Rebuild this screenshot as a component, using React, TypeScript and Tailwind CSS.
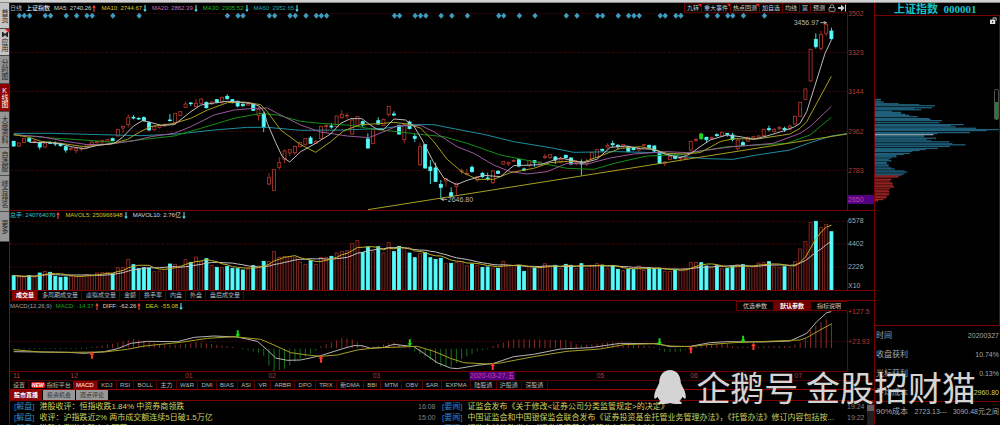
import { Lock } from 'lucide-react'

// [rising, body top, body bottom, high, low, volume top]
// Vertical values are chart units, three to a pixel, growing downwards.
type Candle = [number, number, number, number, number, number]
type Point = [number, number]

const CANDLES: Candle[] = [
  [0, 424, 438, 422, 440, 226], [1, 429, 438, 427, 441, 230], [1, 416, 427, 414, 429, 231], [0, 416, 424, 410, 426, 226],
  [1, 424, 427, 418, 430, 230], [0, 428, 441, 425, 449, 218], [1, 429, 441, 427, 443, 213], [0, 428, 430, 423, 432, 216],
  [0, 430, 432, 424, 438, 228], [0, 431, 437, 429, 440, 231], [0, 440, 450, 437, 458, 230], [1, 446, 448, 442, 452, 228],
  [1, 446, 452, 442, 460, 228], [1, 446, 448, 440, 454, 228], [1, 434, 444, 432, 446, 224], [1, 426, 437, 424, 439, 226],
  [1, 424, 428, 422, 430, 218], [1, 421, 426, 420, 430, 217], [1, 418, 424, 418, 426, 216], [0, 416, 422, 413, 424, 220],
  [1, 388, 408, 388, 408, 202], [1, 379, 384, 377, 398, 202], [1, 353, 374, 343, 382, 177], [0, 352, 354, 345, 358, 193],
  [0, 355, 357, 352, 360, 205], [0, 353, 362, 349, 364, 202], [0, 368, 390, 364, 392, 203], [1, 378, 389, 376, 392, 214],
  [1, 376, 382, 372, 386, 212], [1, 374, 378, 370, 380, 208], [0, 360, 362, 342, 364, 191], [1, 340, 368, 340, 375, 192],
  [1, 335, 346, 333, 348, 197], [1, 312, 322, 304, 324, 178], [0, 309, 311, 306, 318, 186], [1, 310, 320, 296, 322, 170],
  [1, 297, 310, 296, 312, 184], [0, 307, 323, 305, 326, 175], [1, 306, 312, 304, 314, 195], [0, 299, 306, 297, 310, 201],
  [1, 292, 305, 290, 312, 202], [0, 289, 296, 283, 299, 198], [0, 299, 308, 297, 310, 204], [0, 304, 318, 302, 322, 205],
  [0, 313, 317, 306, 320, 209], [1, 310, 315, 305, 318, 206], [0, 313, 331, 311, 333, 196], [1, 328, 346, 322, 362, 197],
  [0, 341, 381, 335, 396, 183], [1, 533, 552, 519, 556, 184], [1, 509, 571, 509, 571, 154], [1, 487, 502, 471, 508, 171],
  [1, 453, 478, 448, 490, 168], [1, 449, 459, 447, 468, 170], [1, 439, 458, 437, 465, 172], [1, 428, 440, 425, 442, 185],
  [1, 416, 434, 414, 436, 192], [0, 414, 430, 408, 432, 181], [1, 425, 430, 420, 432, 192], [1, 379, 416, 377, 418, 171],
  [1, 376, 380, 373, 396, 171], [0, 378, 381, 370, 386, 168], [1, 348, 380, 348, 382, 158], [1, 343, 353, 330, 356, 153],
  [1, 346, 348, 339, 356, 151], [1, 360, 402, 358, 404, 129], [1, 350, 378, 348, 380, 121], [0, 365, 375, 362, 380, 156],
  [0, 417, 444, 400, 446, 141], [1, 387, 430, 387, 430, 155], [0, 362, 372, 352, 374, 139], [1, 358, 376, 356, 378, 158],
  [1, 319, 344, 319, 350, 127], [0, 342, 345, 334, 348, 154], [0, 376, 402, 374, 404, 138], [1, 374, 419, 372, 430, 143],
  [0, 366, 386, 362, 388, 158], [0, 409, 415, 402, 426, 172], [1, 440, 494, 430, 498, 160], [0, 434, 504, 434, 506, 156],
  [0, 501, 512, 480, 552, 172], [0, 504, 544, 488, 546, 177], [0, 553, 562, 540, 598, 174], [1, 536, 543, 534, 560, 190],
  [0, 578, 590, 562, 592, 189], [1, 550, 560, 548, 586, 186], [1, 511, 514, 506, 522, 184], [1, 520, 523, 508, 526, 196],
  [0, 502, 515, 496, 518, 191], [1, 530, 540, 528, 546, 195], [0, 520, 530, 516, 534, 201], [0, 534, 537, 518, 542, 200],
  [1, 513, 548, 510, 552, 203], [0, 514, 520, 510, 522, 204], [1, 484, 492, 484, 494, 183], [1, 488, 492, 484, 498, 196],
  [1, 481, 484, 478, 486, 196], [0, 479, 498, 476, 502, 195], [0, 507, 510, 503, 514, 213], [1, 482, 497, 480, 500, 199],
  [0, 482, 488, 480, 500, 203], [1, 486, 492, 484, 494, 203], [1, 469, 472, 462, 478, 190], [1, 464, 472, 462, 476, 200],
  [0, 471, 480, 468, 492, 195], [1, 478, 486, 470, 490, 205], [0, 466, 473, 464, 475, 192], [0, 474, 492, 472, 494, 195],
  [1, 487, 491, 480, 496, 205], [0, 486, 492, 478, 526, 190], [1, 484, 492, 476, 498, 205], [1, 458, 476, 456, 478, 195],
  [1, 449, 472, 447, 474, 190], [0, 448, 451, 446, 456, 195], [1, 436, 441, 430, 446, 205], [0, 431, 434, 422, 442, 197],
  [0, 436, 440, 432, 448, 207], [1, 434, 438, 432, 446, 211], [0, 440, 455, 438, 457, 207], [0, 444, 449, 442, 451, 208],
  [1, 446, 450, 442, 455, 197], [1, 434, 436, 432, 440, 210], [0, 436, 442, 434, 446, 202], [0, 438, 453, 436, 456, 204],
  [0, 458, 490, 456, 492, 206], [1, 486, 490, 484, 498, 213], [1, 470, 478, 468, 480, 213], [0, 468, 475, 464, 478, 209],
  [1, 472, 476, 468, 484, 211], [1, 472, 476, 470, 480, 205], [1, 424, 450, 422, 452, 186], [1, 418, 421, 415, 426, 186],
  [0, 402, 416, 398, 420, 187], [0, 412, 419, 410, 426, 197], [1, 412, 416, 410, 420, 203], [0, 404, 407, 400, 410, 196],
  [1, 397, 408, 396, 410, 205], [0, 400, 403, 399, 410, 204], [0, 405, 418, 398, 424, 198], [1, 420, 446, 418, 452, 194],
  [0, 428, 437, 422, 438, 193], [1, 412, 423, 410, 426, 203], [1, 410, 414, 408, 420, 200], [1, 408, 416, 406, 418, 188],
  [1, 388, 406, 386, 408, 187], [0, 386, 389, 377, 394, 184], [1, 388, 394, 384, 398, 200], [1, 382, 386, 378, 390, 202],
  [0, 385, 389, 380, 396, 199], [1, 378, 388, 374, 390, 203], [1, 349, 372, 347, 374, 184], [1, 307, 349, 307, 351, 146],
  [1, 267, 298, 265, 300, 124], [1, 148, 243, 146, 245, 67], [0, 118, 140, 100, 146, 63], [1, 103, 145, 92, 152, 82],
  [1, 74, 100, 66, 108, 72], [0, 93, 116, 83, 120, 94],
]

const STEP = 15.645
const xAt = (i: number) => 38 + i * STEP
// left edge of a label as a share of the chart width
const leftAt = (i: number) => `${((xAt(i) - 29) / 2514) * 100}%`

const MA_LINES = [
  { color: '#1f8ea0', d: '38,400 150,400 300,404 420,407 530,402 640,390 740,382 800,382 900,391 1030,390 1150,385 1230,374 1300,374 1370,388 1450,403 1540,425 1650,443 1720,457 1850,455 1970,458 2050,470 2120,476 2200,478 2270,465 2370,450 2430,428 2494,408 2541,401' },
  { color: '#149014', d: '38,404 150,414 250,420 350,428 430,418 520,408 600,385 700,355 780,340 830,345 900,364 960,370 1050,376 1120,388 1190,395 1260,403 1330,410 1400,430 1500,465 1600,485 1700,505 1780,508 1850,488 1940,468 2040,464 2180,440 2280,435 2360,430 2430,405 2494,352' },
  { color: '#9c589c', d: '38,404 120,410 200,425 260,434 330,432 400,422 450,410 520,400 570,380 640,345 700,330 760,325 800,324 830,340 900,375 960,396 1040,408 1105,413 1150,395 1190,378 1260,376 1300,395 1370,440 1420,460 1480,495 1530,515 1580,522 1640,515 1700,490 1760,492 1830,474 1900,462 2000,455 2060,458 2200,440 2320,430 2400,400 2430,380 2494,319' },
  { color: '#a8a020', d: '38,404 85,412 120,424 180,430 250,440 330,432 380,418 420,394 450,380 520,370 570,355 620,330 680,308 730,306 780,314 800,335 840,390 900,434 945,457 990,425 1030,392 1080,374 1150,370 1180,367 1220,372 1260,384 1300,425 1340,478 1385,516 1430,538 1480,538 1530,518 1600,505 1650,488 1700,484 1750,486 1800,468 1860,445 1920,440 1960,448 2000,460 2050,462 2100,458 2160,425 2200,416 2270,417 2370,402 2400,385 2420,365 2450,310 2494,229' },
  { color: '#bcbcbc', d: '85,427 148,428 180,431 210,440 250,446 290,436 340,430 365,412 398,378 425,362 445,366 480,376 520,374 545,355 570,335 600,315 640,309 680,304 710,306 750,310 775,318 790,335 800,370 825,428 845,470 867,486 900,455 940,433 990,402 1020,370 1050,356 1084,356 1105,372 1130,388 1150,388 1180,357 1215,360 1240,378 1265,420 1300,488 1330,534 1368,554 1400,541 1430,532 1450,526 1500,530 1540,497 1570,496 1620,494 1650,484 1680,474 1710,480 1750,488 1790,478 1830,442 1880,438 1920,446 1960,448 2000,464 2040,473 2070,462 2100,440 2130,420 2180,405 2220,410 2260,418 2300,408 2350,393 2384,380 2400,370 2420,335 2450,240 2475,160 2494,120' },
  { color: '#a8a020', d: '1102,629 2541,402' },
]

const DIAMONDS = [
  55, 70, 86, 133, 149, 196, 227, 258, 274, 336, 415, 680, 712, 727, 806, 822, 868, 884, 916, 947, 962, 978, 1182, 1197,
  1244, 1260, 1276, 1322, 1354, 1401, 1495, 1510, 1557, 1604, 1698, 1730, 1792, 1807, 1854, 1885, 1901, 1917, 1980, 1995,
  2027, 2042, 2121, 2152, 2183, 2198, 2230, 2293,
]

const HISTOGRAM: Point[] = [
  [38, 448], [260, 447], [268, 442], [320, 434], [398, 417], [440, 424], [480, 434], [540, 434], [585, 426], [630, 432], [695, 441],
  [726, 447], [773, 458], [790, 468], [805, 498], [820, 513], [850, 508], [883, 485], [930, 462], [950, 450], [961, 438],
  [992, 428], [1024, 414], [1055, 418], [1086, 436], [1110, 443], [1160, 430], [1180, 428], [1211, 440], [1230, 447],
  [1275, 470], [1321, 500], [1352, 500], [1385, 476], [1430, 454], [1462, 448], [1477, 438], [1508, 428], [1540, 418],
  [1600, 418], [1650, 420], [1700, 420], [1740, 436], [1830, 426], [1880, 432], [1960, 440], [1978, 450], [1995, 456],
  [2040, 455], [2060, 448], [2072, 438], [2180, 430], [2200, 440], [2370, 438], [2400, 428], [2420, 415], [2432, 390],
  [2455, 370], [2479, 358], [2494, 368],
]

const histogramAt = (x: number) => {
  const n = HISTOGRAM.findIndex((p) => p[0] >= x)
  if (n <= 0) return HISTOGRAM[n === 0 ? 0 : HISTOGRAM.length - 1][1]
  const [x0, y0] = HISTOGRAM[n - 1]
  const [x1, y1] = HISTOGRAM[n]
  return y0 + ((y1 - y0) * (x - x0)) / (x1 - x0)
}

const SIGNALS = [
  { x: 273, y: 465, up: true }, { x: 961, y: 477, up: true }, { x: 1477, y: 499, up: true },
  { x: 2072, y: 449, up: true }, { x: 2260, y: 439, up: true }, { x: 711, y: 402, up: false },
  { x: 1228, y: 429, up: false }, { x: 1978, y: 426, up: false }, { x: 2229, y: 418, up: false },
]

// chip distribution, [row, length]
const CHIPS: Point[] = [
  [297, 18], [302, 18], [305, 27], [310, 72], [313, 135], [316, 183], [322, 174], [325, 120], [328, 141], [333, 52], [336, 80],
  [339, 78], [342, 92], [345, 104], [349, 130], [355, 165], [358, 170], [361, 204], [367, 196], [373, 270], [376, 232],
  [380, 246], [384, 308], [388, 378], [391, 340], [397, 290], [400, 190], [407, 150], [410, 150], [414, 186],
  [417, 158], [422, 172], [425, 226], [431, 236], [434, 276], [439, 228], [445, 192], [448, 155], [451, 136], [454, 114],
  [460, 106], [463, 88], [467, 64], [470, 66], [474, 50], [479, 43], [482, 50], [487, 36], [491, 36], [495, 42],
  [498, 42], [504, 50], [507, 60], [513, 90], [516, 98], [522, 90], [525, 82],
]
const TRAPPED: Point[] = [
  [528, 74], [531, 70], [538, 50], [543, 46], [549, 52], [552, 54], [558, 55], [561, 58], [567, 46], [573, 42], [576, 44],
  [582, 44], [585, 42], [591, 36], [594, 34], [599, 26], [603, 10],
]

const VOLUME_TABS = ['成交量', '多周期成交量', '虚拟成交量', '金额', '换手率', '内盘', '外盘', '盘后成交量']
const INDICATORS = [
  'MACD', 'KDJ', 'RSI', 'BOLL', '主力', 'W&R', 'DMI', 'BIAS', 'ASI', 'VR', 'ARBR', 'DPO', 'TRIX', '新DMA', 'BBI', 'MTM', 'OBV',
  'SAR', 'EXPMA', '陆股通', '沪股通', '深股通',
]
const TOOLS = [
  { label: '九转', hot: true }, { label: '重大事件', hot: true }, { label: '热点回测', hot: true }, { label: '加自选' },
  { label: '均线' }, { label: '富' }, { label: '预测' },
]
const MONTHS = [
  { i: 0, label: '11' }, { i: 11, label: '12' }, { i: 33, label: '01' }, { i: 49, label: '02' }, { i: 69, label: '03' },
  { i: 112, label: '05' }, { i: 130, label: '06' }, { i: 150, label: '07' },
]
const NEWS_LEFT = [
  { tag: '[解盘]', title: '港股收评：恒指收跌1.84% 中资券商领跌', time: '16:08' },
  { tag: '[解盘]', title: '收评：沪指跌近2% 两市成交额连续5日破1.5万亿', time: '15:00' },
  { tag: '[解盘]', title: '港股上涨光大股上六国药', time: '' },
]
const NEWS_RIGHT = [
  { tag: '[要闻]', title: '证监会发布《关于修改<证券公司分类监管规定>的决定》', time: '19:24' },
  { tag: '[要闻]', title: '中国证监会和中国银保监会联合发布《证券投资基金托管业务管理办法》，《托管办法》修订内容包括按...', time: '19:22' },
  { tag: '[要闻]', title: '证监会就修改发布《证券投资基金托管业务管理办法》', time: '' },
]

const averageVolume = (n: number) =>
  CANDLES.map((_, i) => {
    const part = CANDLES.slice(Math.max(0, i - n + 1), i + 1)
    return `${xAt(i)},${part.reduce((sum, c) => sum + c[5], 0) / part.length}`
  }).join(' ')

function Line({ points, color }: { points: string; color: string }) {
  return <polyline points={points} fill="none" stroke={color} strokeWidth="3" strokeLinejoin="round" />
}

function Guides({ rows }: { rows: number[] }) {
  return (
    <g stroke="#420808" strokeWidth="2.5" strokeDasharray="9 4">
      {rows.map((y) => (
        <line key={y} x1="27" x2="2541" y1={y} y2={y} />
      ))}
    </g>
  )
}

function Trend({ up }: { up?: boolean }) {
  return (
    <svg viewBox="0 0 4 8" className={`h-[7px] w-1 shrink-0 ${up ? 'text-[#ff4a3c]' : 'text-[#54e8f8]'}`}>
      <path d={up ? 'M2 0L4 3H2.6V8H1.4V3H0Z' : 'M2 8L4 5H2.6V0H1.4V5H0Z'} fill="currentColor" />
    </svg>
  )
}

function Reading({ text, up, className }: { text: string; up?: boolean; className: string }) {
  return (
    <span className={`flex items-center gap-px whitespace-nowrap ${className}`}>
      {text}
      <Trend up={up} />
    </span>
  )
}

function SideNav() {
  const base = 'relative flex w-full items-center justify-center border-b border-[#4c4c4c] [writing-mode:vertical-rl] [text-orientation:upright]'
  return (
    <nav className="flex w-[9px] shrink-0 flex-col text-[7px] leading-[9px] text-[#222]">
      <button className={`${base} h-[26px] bg-[#c4c4c4]`}>首页</button>
      <button className={`${base} h-[27px] bg-[#c4c4c4]`}>
        <svg viewBox="0 0 6 5" className="mb-px h-[5px] w-[6px]">
          <path d="M0 0H1L3 2L5 0H6V5H5L3 3L1 5H0Z" fill="#222" />
        </svg>
        应用
        <svg viewBox="0 0 4 4" className="absolute top-0 right-0 size-1">
          <path d="M0 0H4V4Z" fill="#e01818" />
        </svg>
      </button>
      <button className={`${base} h-7 bg-[#969696]`}>分时图</button>
      <button className={`${base} h-7 bg-[#8c0000] text-white`}>K线图</button>
      <button className={`${base} h-9 bg-[#969696]`}>大盘资料</button>
      <button className={`${base} h-7 bg-[#969696]`}>自选股</button>
      <button className={`${base} h-9 bg-[#969696]`}>综合排名</button>
      <button className={`${base} h-[30px] bg-[#969696]`}>更多</button>
    </nav>
  )
}

function PriceHeader() {
  return (
    <header className="flex h-[10px] shrink-0 items-center pr-[27px]">
      <div className="flex flex-1 items-center gap-[5px]">
        <div className="flex gap-1">
          <span className="whitespace-nowrap text-[#b8b8b8]">日线</span>
          <h1 className="whitespace-nowrap text-white">上证指数</h1>
          <Reading text="MA5: 2740.26" up className="text-[#d8d8d8]" />
        </div>
        <Reading text="MA10: 2744.67" className="text-[#d0c820]" />
        <Reading text="MA20: 2862.39" className="text-[#c070c0]" />
        <Reading text="MA30: 2905.52" className="text-[#18b818]" />
        <Reading text="MA60: 2952.65" className="text-[#20a8b8]" />
      </div>
      <div className="flex h-full items-center border-y border-[#480000] text-[#d0d0d0]">
        {TOOLS.map((tool) => (
          <button key={tool.label} className="relative h-full border-l border-[#780000] px-[2px] leading-[9px] whitespace-nowrap">
            {tool.label}
            {tool.hot && (
              <svg viewBox="0 0 4 4" className="absolute top-0 right-0 size-[3px]">
                <path d="M0 0H4V4Z" fill="#ff2020" />
              </svg>
            )}
          </button>
        ))}
        <button aria-label="锁定" className="flex w-[10px] justify-center">
          <Lock className="size-2" />
        </button>
        <button aria-label="收起" className="flex w-[10px] justify-center">
          <svg viewBox="0 0 8 8" className="size-2">
            <path d="M0 3H3V0.500L6.500 4L3 7.500V5H0ZM7 0.500H8V7.500H7Z" fill="currentColor" />
          </svg>
        </button>
      </div>
    </header>
  )
}

function PriceChart() {
  return (
    <section className="flex h-[197px] shrink-0">
      <div className="relative min-w-0 flex-1">
        <svg viewBox="27 39 2514 591" preserveAspectRatio="none" className="block size-full">
          <Guides rows={[40, 157, 274, 394, 511]} />
          {DIAMONDS.map((x) => (
            <path key={x} d={`M${x} 38L${x + 8} 47L${x} 56L${x - 8} 47Z`} fill="#3c9cc0" />
          ))}
          {CANDLES.map(([rising, top, bottom, high, low], i) => {
            const x = xAt(i)
            const color = i === 132 ? '#18e018' : rising ? '#b8382e' : '#54fcfc'
            return (
              <g key={i} stroke={color} strokeWidth="2.500">
                <path d={`M${x} ${high}V${top}M${x} ${bottom}V${low}`} />
                <rect x={x - 4.5} y={top} width="9" height={bottom - top} fill={rising ? '#000' : color} />
              </g>
            )
          })}
          {MA_LINES.map((line, i) => (
            <Line key={i} points={line.d} color={line.color} />
          ))}
          <path d="M1322 598H1340M1322 598L1330 594M1322 598L1330 602M2461 68H2479M2479 68L2471 64M2479 68L2471 72" fill="none" stroke="#c8c8c8" strokeWidth="2.500" />
        </svg>
        <span className="absolute top-[182px] left-[52.300%] text-[7px] leading-[9px] text-[#b8b8b8]">2646.80</span>
        <span className="absolute top-[5px] right-[28px] text-[7px] leading-[9px] text-[#b8b8b8]">3456.97</span>
      </div>
      <div className="relative w-[27px] border-l border-[#780000] text-[7px] leading-[9px] text-[#b83830]">
        {[3502, 3323, 3144, 2962, 2783].map((price) => (
          <span key={price} className="absolute left-0" style={{ top: `${((3502 - price) / 4.573 - 4) / 1.97}%` }}>
            {price}
          </span>
        ))}
        <span className="absolute bottom-[6px] left-0 w-full bg-[#500080] text-[#d040a0]">2650</span>
      </div>
    </section>
  )
}

function VolumePanel() {
  return (
    <section className="shrink-0">
      <div className="flex h-[10px] items-center gap-[5px] border-t border-[#780000]">
        <Reading text="总手: 240764070" up className="text-[#38c0c8]" />
        <Reading text="MAVOL5: 250966948" className="text-[#d0c820]" />
        <Reading text="MAVOL10: 2.76亿" className="text-[#d8d8d8]" />
      </div>
      <div className="flex h-[70px]">
        <svg viewBox="27 60 2514 210" preserveAspectRatio="none" className="block h-full min-w-0 flex-1">
          <Guides rows={[64, 132, 201]} />
          {CANDLES.map(([rising, , , , , top], i) => (
            <rect
              key={i}
              x={xAt(i) - 4.5}
              y={top + 1}
              width="9"
              height={270 - top}
              fill={rising ? '#180303' : '#54fcfc'}
              stroke={rising ? '#8e2c26' : '#54fcfc'}
              strokeWidth="2.500"
            />
          ))}
          <Line points={averageVolume(10)} color="#c8c0c0" />
          <Line points={averageVolume(5)} color="#c0b028" />
        </svg>
        <div className="flex w-[27px] flex-col border-l border-[#780000] text-[7px] leading-[9px] text-[#a8a8a8]">
          <span className="-mt-1 mb-[14px]">6578</span>
          <span className="mb-[14px]">4402</span>
          <span className="mb-[10px]">2226</span>
          <span>X10</span>
        </div>
      </div>
      <div role="tablist" className="flex h-[11px] border-y border-[#780000] pl-[2px]">
        {VOLUME_TABS.map((tab, i) => (
          <button
            key={tab}
            role="tab"
            className={`border-r border-[#580000] pr-[3px] pl-1 leading-[9px] whitespace-nowrap ${i === 0 ? 'bg-[#8c0000] font-bold text-white' : 'text-[#b8b8b8]'}`}
          >
            {tab}
          </button>
        ))}
      </div>
    </section>
  )
}

function MacdPanel() {
  return (
    <section className="shrink-0">
      <div className="flex h-[10px] items-center pr-[27px]">
        <div className="flex flex-1 items-center gap-1">
          <span className="text-[#a0a0a0]">MACD(12,26,9)</span>
          <Reading text="MACD: -14.37" up className="text-[#18a018]" />
          <Reading text="DIFF: -62.26" up className="text-[#d8d8d8]" />
          <Reading text="DEA: -55.08" className="text-[#d0c820]" />
        </div>
        <div className="flex h-full text-[#c8c8c8]">
          <button className="border border-r-0 border-[#680000] px-[6px] leading-[8px]">优选参数</button>
          <button className="border border-r-0 border-[#680000] bg-[#700000] px-[6px] leading-[8px] font-bold text-white">默认参数</button>
          <button className="border border-r-0 border-[#680000] px-[6px] leading-[8px]">指标说明</button>
        </div>
      </div>
      <div className="flex h-[60px]">
        <svg viewBox="27 333 2514 180" preserveAspectRatio="none" className="block h-full min-w-0 flex-1">
          <Guides rows={[336, 424]} />
          {CANDLES.map((_, i) => {
            const y = histogramAt(xAt(i))
            return <line key={i} x1={xAt(i)} x2={xAt(i)} y1={y} y2={y < 445 ? 444 : Math.min(446, y - 3)} stroke={y < 445 ? '#8c2a26' : '#147018'} strokeWidth="3" />
          })}
          <Line color="#b4b4b4" points="38,455 200,457 250,460 310,455 350,446 390,430 440,424 530,425 580,412 640,408 710,411 770,424 800,450 825,474 860,481 900,480 960,467 1030,445 1060,437 1085,437 1110,445 1150,442 1180,433 1240,440 1270,460 1310,488 1350,504 1370,506 1430,496 1480,490 1540,470 1600,463 1680,447 1770,443 1860,430 1970,431 2010,440 2070,439 2130,428 2180,425 2290,426 2370,423 2420,400 2450,365 2480,338 2494,335" />
          <Line color="#a8a020" points="38,449 120,456 200,457 310,456 380,448 430,438 540,427 620,415 700,410 780,418 820,435 870,458 920,465 960,469 1010,465 1070,450 1120,444 1250,439 1300,454 1350,475 1390,488 1460,492 1500,489 1600,470 1700,454 1800,447 1870,434 1960,431 2010,438 2070,440 2110,435 2200,428 2400,420 2420,413 2460,390 2494,372" />
          {SIGNALS.map(({ x, y, up }) => (
            <path
              key={x}
              d={up ? `M${x} ${y - 11}l7 10h-4v12h-6v-12h-4Z` : `M${x} ${y + 11}l7 -10h-4v-12h-6v12h-4Z`}
              fill={up ? '#ff3828' : '#10e010'}
            />
          ))}
        </svg>
        <div className="flex w-[27px] flex-col border-l border-[#780000] text-[7px] leading-[9px] text-[#b83830]">
          <span className="-mt-1 mb-[21px]">+127.5</span>
          <span>+23.93</span>
        </div>
      </div>
      <div className="flex h-[9px]">
        <div className="relative flex-1 border-t border-[#780000] text-[7px] leading-[8px] text-[#b83830]">
          {MONTHS.map(({ i, label }) => (
            <span key={i} className="absolute top-0" style={{ left: leftAt(i) }}>
              {label}
            </span>
          ))}
          <span className="absolute top-0 -translate-x-1/2 bg-[#500080] whitespace-nowrap text-[#d040a0]" style={{ left: leftAt(92) }}>
            2020-03-27,五
          </span>
        </div>
        <div className="w-[27px]" />
      </div>
    </section>
  )
}

function IndicatorBar() {
  return (
    <div className="flex h-[10px] shrink-0 border-t border-b border-t-[#480000] border-b-[#a00000] leading-[8px] whitespace-nowrap text-[#b8b8b8]">
      <button className="border-r border-[#580000] px-[3px]">设置</button>
      <button className="flex items-center gap-[2px] px-[2px]">
        <span className="rounded-[2px] bg-[#f01818] px-px text-[5px] leading-[6px] font-bold text-white italic">NEW</span>
        指标平台
      </button>
      <div role="tablist" className="flex w-[475px]">
        {INDICATORS.map((name, i) => (
          <button key={name} role="tab" className={`flex-auto border-r border-[#580000] ${i === 0 ? 'bg-[#8c0000] text-white' : ''}`}>
            {name}
          </button>
        ))}
      </div>
    </div>
  )
}

function NewsList({ items, className }: { items: typeof NEWS_LEFT; className: string }) {
  return (
    <ul className={`min-w-0 ${className}`}>
      {items.map((item) => (
        <li key={item.title} className="flex h-[11px] gap-[5px] leading-[11px] whitespace-nowrap">
          <span className="text-[#3088c0]">{item.tag}</span>
          <a href="#" className="min-w-0 flex-1 overflow-hidden text-[#d0d060]">
            {item.title}
          </a>
          <time className="w-5 text-[7px] text-[#808080]">{item.time}</time>
        </li>
      ))}
    </ul>
  )
}

function News() {
  return (
    <section className="flex min-h-0 flex-1 flex-col">
      <div role="tablist" className="flex h-[11px] shrink-0 gap-px border-b border-[#780000] leading-[10px]">
        <button role="tab" className="bg-[#8c0000] px-1 font-bold text-white">股市直播</button>
        <button role="tab" className="bg-[#989898] px-1 text-[#303030]">投资机会</button>
        <button role="tab" className="bg-[#989898] px-1 text-[#303030]">观点评论</button>
      </div>
      <div className="flex min-h-0 flex-1 overflow-hidden text-[8px]">
        <NewsList items={NEWS_LEFT} className="w-1/2 pr-1 pl-1" />
        <NewsList items={NEWS_RIGHT} className="flex-1" />
        <div className="w-[7px] bg-[#202020] pt-1">
          <div className="h-[6px] bg-[#606060]" />
        </div>
      </div>
    </section>
  )
}

function ChipPanel() {
  return (
    <aside className="flex w-[126px] shrink-0 flex-col border-l border-[#780000] text-[8px] text-[#a8a8a8]">
      <h2 className="h-3 pl-[19px] text-[11px] leading-[12px] font-bold whitespace-nowrap text-[#18c0c8] [font-family:'Liberation_Serif','Noto_Sans_CJK_SC',serif]">
        上证指数 &nbsp;000001
      </h2>
      <div className="relative h-[311px] border-y border-r border-[#780000]">
        <svg viewBox="522 45 378 933" preserveAspectRatio="none" className="block size-full">
          {CHIPS.map(([y, length]) => (
            <rect key={y} x="522" y={y - 2} width={length} height="4" fill="#1f5f7a" />
          ))}
          {TRAPPED.map(([y, length]) => (
            <rect key={y} x="522" y={y - 2} width={length} height="4" fill="#a02424" />
          ))}
          <rect x="522" y="402" width="178" height="3" fill="#a8c8d0" />
        </svg>
        <button aria-label="解锁" className="absolute top-px right-[2px] text-[#e0e0e0]">
          <svg viewBox="0 0 8 8" className="size-[7px]">
            <path d="M0 3H6V8H0Z" fill="currentColor" />
            <path d="M3.500 3V1H7V4" fill="none" stroke="currentColor" strokeWidth="1" />
            <path d="M2.500 4.500H3.500V6.500H2.500Z" fill="#000" />
          </svg>
        </button>
        <div className="absolute top-[73px] right-0 flex h-[31px] w-[5px] items-end rounded-[2px] border border-[#505050]">
          <div className="h-[17px] w-full bg-[#208030]" />
        </div>
      </div>
      <dl className="leading-[19px] whitespace-nowrap [&_dd]:text-[7px] [&>div]:flex [&>div]:h-[19px] [&>div]:justify-between [&>div]:px-px">
        <div>
          <dt>时间</dt>
          <dd>20200327</dd>
        </div>
        <div>
          <dt>收盘获利</dt>
          <dd>10.74%</dd>
        </div>
        <div>
          <dt>光标获利</dt>
          <dd>0.13%</dd>
        </div>
        <div className="border-b border-[#780000]">
          <dt>平均成本</dt>
          <dd className="text-[#d0d060]">2960.80</dd>
        </div>
        <div>
          <dt>90%成本</dt>
          <dd>2723.13--- &nbsp; 3090.48元之间</dd>
        </div>
      </dl>
    </aside>
  )
}

function Watermark() {
  return (
    <div className="pointer-events-none absolute right-6 bottom-[18px] flex items-center gap-[10px] text-[34px] leading-[40px] whitespace-nowrap text-[#e0e0e0] opacity-95 [font-family:'Noto_Sans_CJK_SC',sans-serif]">
      <svg viewBox="0 0 96 102" className="h-[34px] w-8">
        <path
          d="M48 0C67 0 79 15 80 34C80 41 84 46 86 51C92 61 97 76 95 84C93 89 89 84 85 80C83 86 80 90 76 93C81 95 85 98 83 101C78 103 57 102 48 99C39 102 18 103 13 101C11 98 15 95 20 93C16 90 13 86 11 80C7 84 3 89 1 84C-1 76 4 61 10 51C12 46 16 41 16 34C17 15 29 0 48 0Z"
          fill="currentColor"
        />
      </svg>
      企鹅号 金股招财猫
    </div>
  )
}

export default function App() {
  return (
    <div className="relative flex h-screen flex-col overflow-hidden bg-black text-[6px] [font-family:'Liberation_Sans','Noto_Sans_CJK_SC',sans-serif]">
      <div className="h-[3px] shrink-0 border-b border-[#888] bg-[#d0d0d0]" />
      <div className="flex min-h-0 flex-1">
        <SideNav />
        <main className="flex min-w-0 flex-1 flex-col border-l border-[#a00000]">
          <PriceHeader />
          <PriceChart />
          <VolumePanel />
          <MacdPanel />
          <IndicatorBar />
          <News />
        </main>
        <ChipPanel />
      </div>
      <Watermark />
    </div>
  )
}
